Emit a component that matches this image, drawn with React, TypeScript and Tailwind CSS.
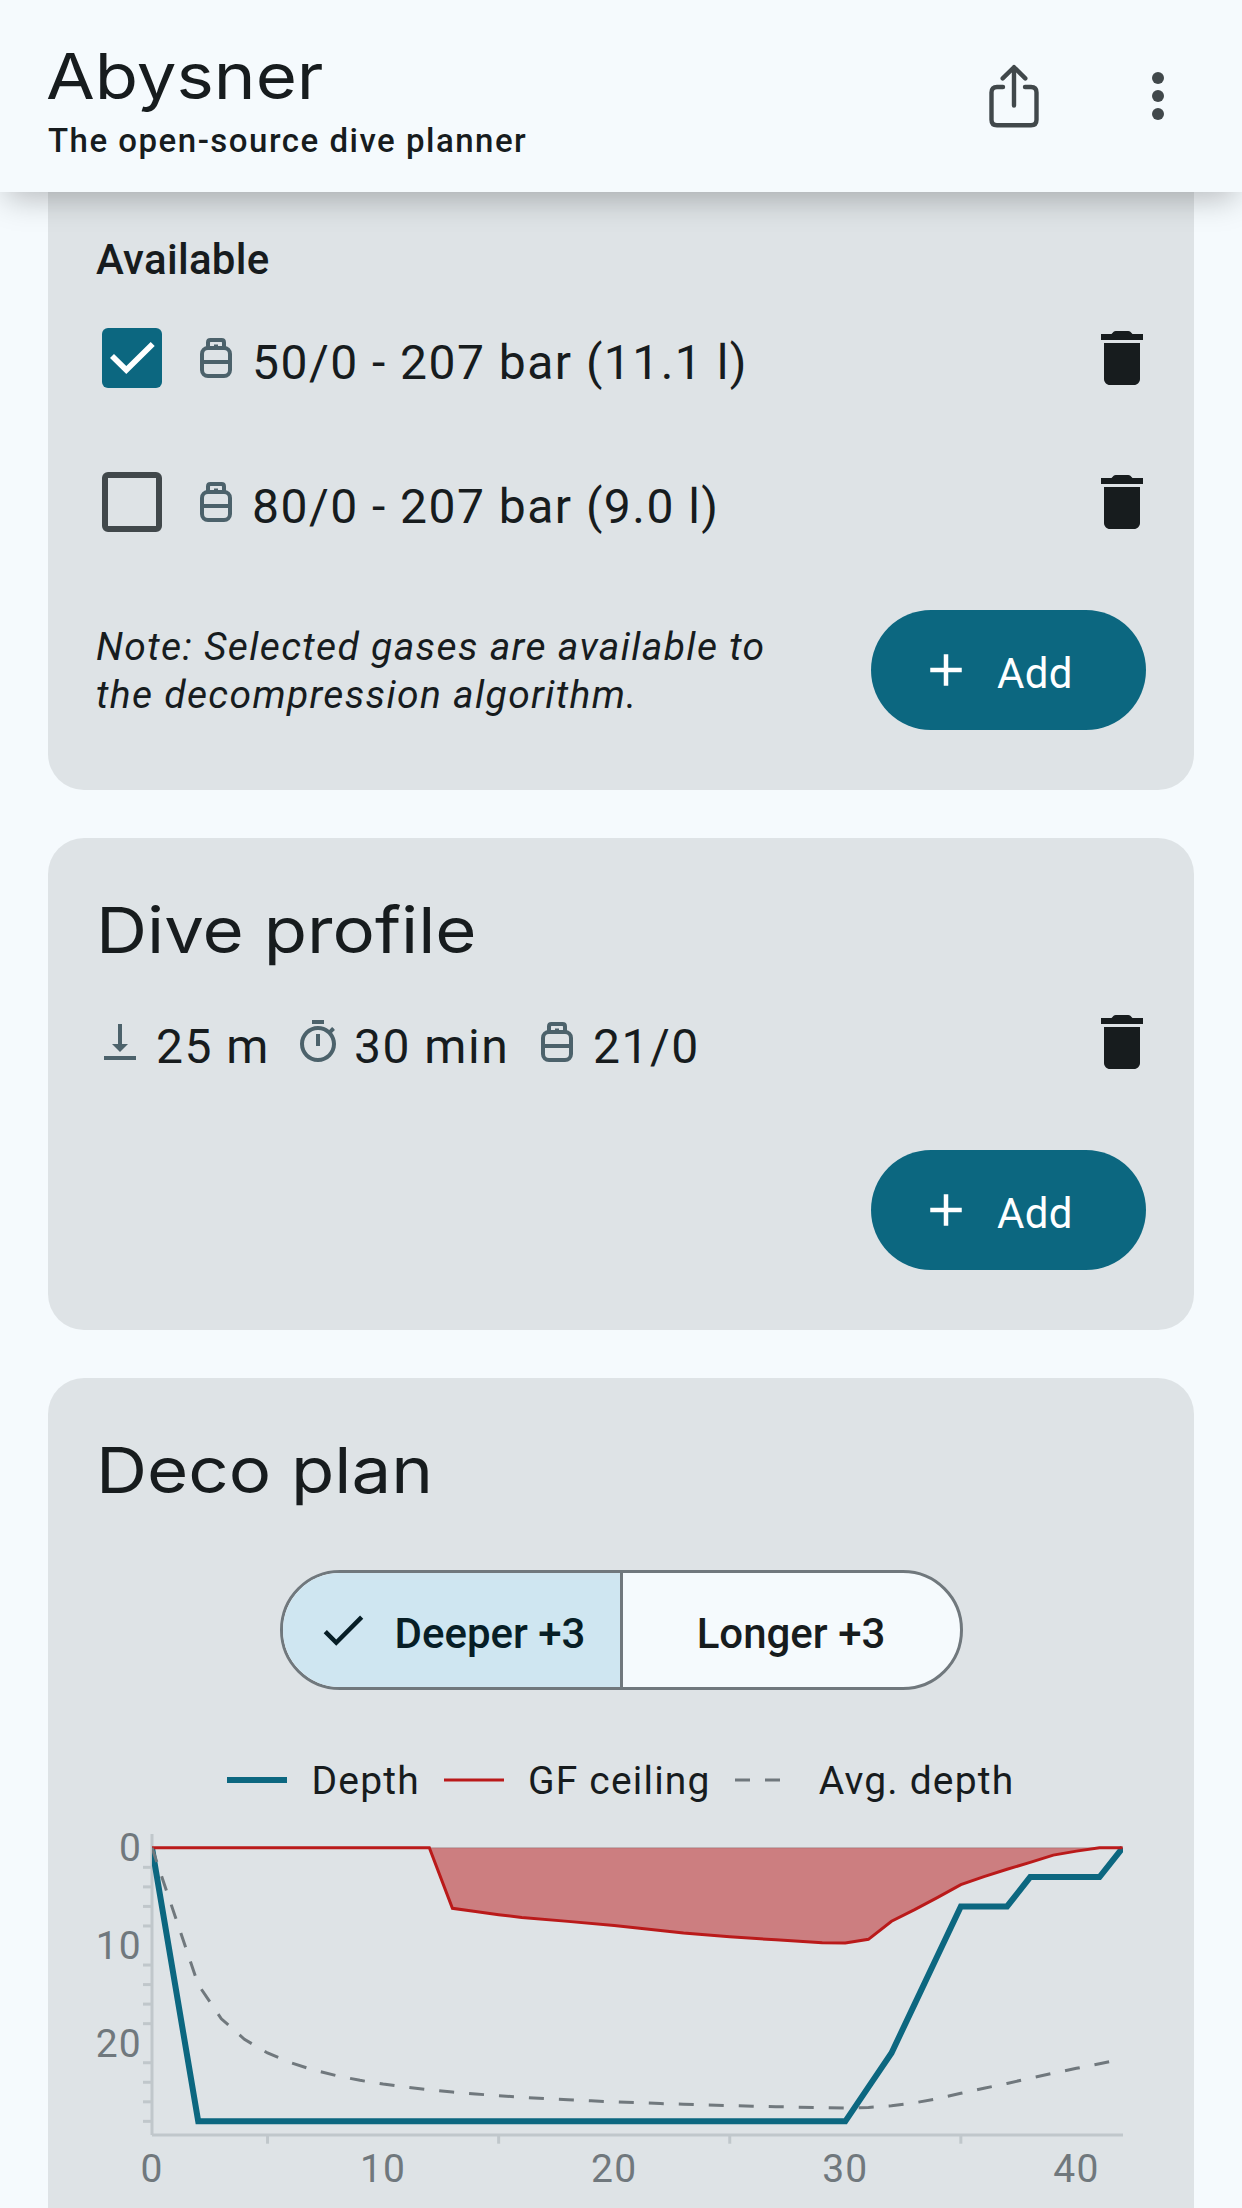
import React from "react";

const INK = "#171c1e";
const CHART = { left: 152, zero: 1847.8, perMin: 23.11, perMetre: 9.77 };

const depthAt = (t: number): number => {
  const knots: [number, number][] = [
    [0, 0], [2, 28], [30, 28], [32, 21], [35, 6], [37, 6], [38, 3], [41, 3], [42, 0],
  ];
  for (let i = 1; i < knots.length; i++) {
    const [t0, d0] = knots[i - 1];
    const [t1, d1] = knots[i];
    if (t <= t1) return d0 + ((d1 - d0) * (t - t0)) / (t1 - t0);
  }
  return 0;
};

const minutes = Array.from({ length: 43 }, (_, i) => i);
const depths = minutes.map(depthAt);
const averages = minutes.map(
  (t) => depths.slice(0, t + 1).reduce((a, b) => a + b, 0) / (t + 1),
);
const ceiling: [number, number][] = [
  [0, 0], [12, 0], [13, 6.19], [14, 6.53], [15, 6.85], [16, 7.13], [18, 7.53], [20, 7.95],
  [21, 8.2], [23, 8.71], [25, 9.1], [27, 9.42], [29, 9.71], [30, 9.74], [31, 9.37],
  [32, 7.52], [33, 6.33], [34, 5.07], [35, 3.77], [36, 2.95], [37, 2.2], [38, 1.49],
  [39, 0.75], [40, 0.34], [41, 0], [42, 0],
];

const px = (t: number) => (CHART.left - 48 + t * CHART.perMin).toFixed(2);
const py = (d: number) => (CHART.zero - 1820 + d * CHART.perMetre).toFixed(2);
const line = (pts: [number, number][]) =>
  "M" + pts.map(([t, d]) => `${px(t)} ${py(d)}`).join("L");

function Share() {
  return (
    <svg className="h-[72px] w-[72px]" viewBox="0 0 72 72" fill="none" stroke="#41484b" strokeWidth="4.4" strokeLinecap="round" strokeLinejoin="round">
      <path d="M36 45.500V7.200M24.700 18.400L36 7.200L47.300 18.400" />
      <path d="M25 27H19Q13.500 27 13.500 32.500V59.700Q13.500 65.200 19 65.200H53Q58.500 65.200 58.500 59.700V32.500Q58.500 27 53 27H47" />
    </svg>
  );
}

function Dots() {
  return (
    <svg className="h-[72px] w-[72px]" viewBox="0 0 24 24" fill="#41484b">
      <circle cx="12" cy="6" r="2" />
      <circle cx="12" cy="12" r="2" />
      <circle cx="12" cy="18" r="2" />
    </svg>
  );
}

function Trash() {
  return (
    <svg className="h-[72px] w-[72px] shrink-0" viewBox="0 0 24 24" fill={INK}>
      <path d="M6 19c0 1.100.9 2 2 2h8c1.100 0 2-.9 2-2V7H6v12zM19 4h-3.500l-.71-.71c-.18-.18-.44-.29-.7-.29H9.910c-.26 0-.52.11-.7.29L8.500 4H5v2h14V4z" />
    </svg>
  );
}

function Bottle() {
  return (
    <svg className="h-12 w-12 shrink-0" viewBox="0 0 24 24" fill="none" stroke="#4c626b" strokeWidth="2">
      <rect x="5" y="7" width="14" height="14" rx="3" />
      <path d="M5 14H19M8 7V4.200Q8 3 9.200 3H14.800Q16 3 16 4.200V7M12 5.300V7" />
    </svg>
  );
}

function Arrow() {
  return (
    <svg className="h-12 w-12 shrink-0" viewBox="0 0 24 24" fill="#4c626b">
      <path d="M16 13h-3V3h-2v10H8l4 4 4-4zM4 19v2h16v-2H4z" />
    </svg>
  );
}

function Timer() {
  return (
    <svg className="h-12 w-12 shrink-0" viewBox="0 0 24 24" fill="#4c626b">
      <path d="M15 1H9v2h6V1zm-4 13h2V8h-2v6zm8.030-6.610l1.420-1.420c-.43-.51-.9-.99-1.410-1.410l-1.420 1.420C16.070 4.740 14.120 4 12 4c-4.970 0-9 4.030-9 9s4.020 9 9 9 9-4.030 9-9c0-2.120-.74-4.070-1.970-5.610zM12 20c-3.870 0-7-3.130-7-7s3.130-7 7-7 7 3.130 7 7-3.130 7-7 7z" />
    </svg>
  );
}

function Heading({ children }: { children: React.ReactNode }) {
  return (
    <h2 className="h-[84px] origin-left scale-x-[1.114] pt-px font-['Inter',sans-serif] text-[63.5px] leading-[85px] whitespace-nowrap">
      {children}
    </h2>
  );
}

function AddButton() {
  return (
    <button className="flex h-[120px] w-[275px] shrink-0 items-center rounded-full bg-[#0c6780] pl-12 text-white">
      <svg className="h-[54px] w-[54px]" viewBox="0 0 24 24" fill="currentColor">
        <path d="M19 13h-6v6h-2v-6H5v-2h6V5h2v6h6v2z" />
      </svg>
      <span className="ml-6 pt-2 text-[42px] leading-[60px] font-[450] tracking-[0.3px]">Add</span>
    </button>
  );
}

function GasRow({ label, checked }: { label: string; checked?: boolean }) {
  return (
    <div className="flex h-[144px] items-center">
      <div className={checked ? "ml-1.5 h-[60px] w-[60px] rounded-md bg-[#0c6780]" : "ml-1.5 h-[60px] w-[60px] rounded-md border-6 border-[#41484b]"}>
        {checked && (
          <svg className="h-[60px] w-[60px]" viewBox="0 0 60 60" fill="none" stroke="#fff" strokeWidth="5.7">
            <path d="M10 28L24.300 42L50.700 16" />
          </svg>
        )}
      </div>
      <div className="ml-[30px]"><Bottle /></div>
      <span className="ml-3 grow pt-2.5 text-[48px] leading-[72px] tracking-[1.47px]">{label}</span>
      <div className="-mr-3"><Trash /></div>
    </div>
  );
}

function Legend({ color, width, dashed, label }: { color: string; width: number; dashed?: boolean; label: string }) {
  return (
    <div className="flex items-center gap-6">
      <svg className="h-2 w-[60px]" viewBox="0 0 60 8">
        <path d="M0 4H60" stroke={color} strokeWidth={width} strokeDasharray={dashed ? "15 15" : undefined} />
      </svg>
      <span className="pt-0.5 text-[39px] leading-12 tracking-[1.2px]">{label}</span>
    </div>
  );
}

function Chart() {
  const yTicks = Array.from({ length: 14 }, (_, i) => (i + 1) * 2).filter((d) => d % 10 !== 0);
  return (
    <svg className="block h-[388px] w-[1146px]" viewBox="0 0 1146 388">
      <defs>
        <clipPath id="plot"><rect x="104" y="0" width="971" height="330" /></clipPath>
      </defs>
      <g stroke="#c0c7cb" strokeWidth="3" fill="none">
        <path d="M104 14V315M104 315H1075" />
        <path d={`M104 ${py(0)}H1075`} strokeWidth="1.5" />
        {yTicks.map((d) => <path key={d} d={`M95 ${py(d)}H104`} />)}
        {[5, 15, 25, 35].map((t) => <path key={t} d={`M${px(t)} 315V323.700`} />)}
      </g>
      <g clipPath="url(#plot)" fill="none">
        <path d={line(ceiling) + "Z"} fill="#ba1a1a" fillOpacity="0.5" />
        <path d={line(minutes.map((t) => [t, depths[t]]))} stroke="#0c6780" strokeWidth="6" />
        <path d={line(ceiling)} stroke="#ba1a1a" strokeWidth="3" />
        <path d={line(minutes.map((t) => [t, averages[t]]))} stroke="#70787d" strokeWidth="3" strokeDasharray="15 15" />
      </g>
      <g fill="#70787d" fontSize="39" letterSpacing="1.2">
        {[0, 10, 20].map((d) => (
          <text key={d} x="94" y={41.4 + d * CHART.perMetre} textAnchor="end">{d}</text>
        ))}
        {[0, 10, 20, 30, 40].map((t) => (
          <text key={t} x={px(t)} y="362" textAnchor="middle">{t}</text>
        ))}
      </g>
    </svg>
  );
}

export default function App() {
  return (
    <div className="flex h-[2208px] w-[1242px] flex-col overflow-hidden bg-[#f5fafd] font-['Roboto',sans-serif] text-[#171c1e]">
      <header className="z-10 flex h-48 shrink-0 items-start justify-between bg-[#f5fafd] px-12 shadow-[0_12px_30px_-6px_rgba(0,0,0,0.26)]">
        <div className="pt-8">
          <div className="-ml-0.5"><Heading>Abysner</Heading></div>
          <p className="pt-px text-[33px] leading-[48px] font-medium tracking-[1.5px]">The open-source dive planner</p>
        </div>
        <div className="flex gap-[72px] pt-[60px]">
          <Share />
          <Dots />
        </div>
      </header>
      <main className="flex flex-col gap-12 px-12">
        <section className="h-[598px] shrink-0 rounded-b-[36px] bg-[#dee3e6] px-12 pt-[38px]">
          <h3 className="text-[42px] leading-[60px] font-medium tracking-[0.3px]">Available</h3>
          <div className="-mt-1">
            <GasRow label="50/0 - 207 bar (11.1 l)" checked />
            <GasRow label="80/0 - 207 bar (9.0 l)" />
          </div>
          <div className="mt-9 flex justify-between">
            <p className="pt-[13px] text-[39px] leading-12 tracking-[1.35px] whitespace-nowrap italic">
              Note: Selected gases are available to
              <br />
              the decompression algorithm.
            </p>
            <AddButton />
          </div>
        </section>
        <section className="h-[492px] shrink-0 rounded-[36px] bg-[#dee3e6] px-12 pt-12">
          <Heading>Dive profile</Heading>
          <div className="flex h-[144px] items-center text-[48px] leading-[72px] tracking-[1.5px]">
            <div className="flex w-[198px] items-center gap-3"><Arrow /><span className="pt-2.5">25 m</span></div>
            <div className="flex w-[239px] items-center gap-3"><Timer /><span className="pt-2.5">30 min</span></div>
            <div className="flex grow items-center gap-3"><Bottle /><span className="pt-2.5">21/0</span></div>
            <div className="-mr-3"><Trash /></div>
          </div>
          <div className="mt-9 flex justify-end"><AddButton /></div>
        </section>
        <section className="h-[900px] shrink-0 rounded-[36px] bg-[#dee3e6] pt-12">
          <div className="px-12"><Heading>Deco plan</Heading></div>
          <div className="mx-auto mt-[60px] flex h-[120px] w-[683px] overflow-hidden rounded-full border-3 border-[#70787d] bg-[#f5fafd] text-[42px] leading-[60px] font-medium">
            <div className="flex w-[340px] shrink-0 items-center border-r-3 border-[#70787d] bg-[#cfe6f1] pl-[33px] text-[#071e26]">
              <svg className="h-[54px] w-[54px]" viewBox="0 0 24 24" fill="currentColor">
                <path d="M9 16.170L4.830 12l-1.420 1.410L9 19 21 7l-1.410-1.410z" />
              </svg>
              <span className="ml-[25px] pt-2">Deeper +3</span>
            </div>
            <div className="flex grow items-center justify-center pt-2">Longer +3</div>
          </div>
          <div className="mt-[66px] flex h-12 items-center justify-center gap-6">
            <Legend color="#0c6780" width={6} label="Depth" />
            <Legend color="#ba1a1a" width={3} label="GF ceiling" />
            <Legend color="#70787d" width={3} dashed label="Avg. depth" />
          </div>
          <div className="mt-4"><Chart /></div>
        </section>
      </main>
    </div>
  );
}
